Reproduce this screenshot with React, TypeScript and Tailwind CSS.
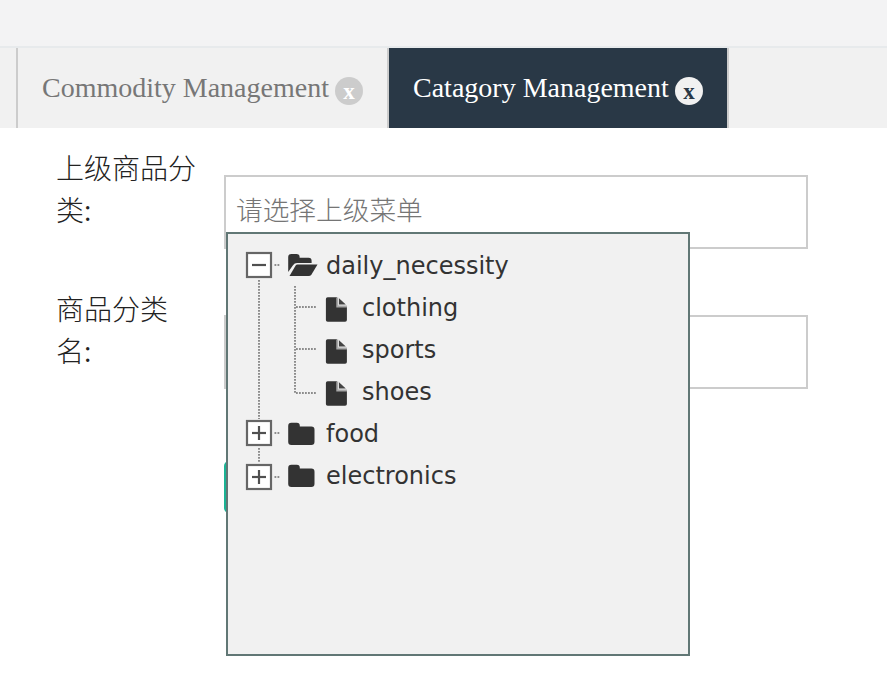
import React from "react";

type TabProps = { title: string; active?: boolean };

function Tab({ title, active }: TabProps) {
  return (
    <div
      className={
        active
          ? "flex h-20 w-[340px] shrink-0 border-r-2 border-[#cccccc] bg-[#293846] pl-6 text-white"
          : "flex h-20 w-[373px] shrink-0 border-x-2 border-[#cccccc] pl-6 text-[#777777]"
      }
    >
      <span
        className={
          active
            ? "mt-5 w-[262px] whitespace-nowrap text-[28px] leading-10"
            : "mt-5 w-[293px] whitespace-nowrap text-[28px] leading-10"
        }
      >
        {title}
      </span>
      <span
        className={
          active
            ? "mt-[29px] flex h-7 w-7 items-center justify-center rounded-full bg-[#f1f1f1] pt-px text-[23px] font-bold leading-7 text-[#293846]"
            : "mt-[29px] flex h-7 w-7 items-center justify-center rounded-full bg-[#cccccc] pt-px text-[23px] font-bold leading-7 text-white"
        }
      >
        x
      </span>
    </div>
  );
}

function Toggle({ y, open }: { y: number; open?: boolean }) {
  return (
    <g>
      <rect x="1" y={y + 1} width="24" height="24" fill="#fff" stroke="#666" strokeWidth="2.2" />
      <path d={`M6 ${y + 13}H20`} stroke="#505050" strokeWidth="2.2" />
      {!open && <path d={`M13 ${y + 6}V${y + 20}`} stroke="#505050" strokeWidth="2.2" />}
    </g>
  );
}

const dots = { stroke: "#8c8c8c", strokeWidth: 2, strokeDasharray: "1.8 1.2" };

function FolderOpen() {
  return (
    <svg className="h-[42px] w-8 shrink-0" viewBox="0 0 32 42" fill="#333">
      <path d="M1.200 28V13q0-3 3-3h5.400q3 0 3 3v.7h9q3 0 3 3v2.300H10q-2.500 0-4 2.200z" />
      <path d="M10.500 20.500H30.500L24.500 30.500Q23.500 32 21.500 32H2.500L8.500 21.700Q9.200 20.500 10.500 20.500z" />
    </svg>
  );
}

function Folder() {
  return (
    <svg className="h-[42px] w-8 shrink-0" viewBox="0 0 32 42" fill="#333">
      <path d="M1.200 14q0-3.200 3.200-3.200h5.400q3 0 3 3v.700h11.500q3.200 0 3.200 3.200v12q0 3.200-3.200 3.200H4.400q-3.200 0-3.200-3.200z" />
    </svg>
  );
}

function FileIcon() {
  return (
    <svg className="h-[42px] w-8 shrink-0" viewBox="0 0 32 42">
      <path d="M2.700 11.200H12V20.700H21.900V34q0 1.800-1.800 1.800H2.700q-1.800 0-1.800-1.800V13q0-1.800 1.800-1.800z" fill="#333" />
      <path d="M12.300 11.500V20.500H21.900" stroke="#a8a8a8" strokeWidth="2" fill="none" />
      <path d="M14 12.200V18.500H20.800z" fill="#444" />
    </svg>
  );
}

function Label({ children }: { children: React.ReactNode }) {
  return <span className="whitespace-nowrap pt-px text-[24px] font-normal leading-[42px] text-[#333333]">{children}</span>;
}

function ChildRow({ name, last }: { name: string; last?: boolean }) {
  return (
    <li className="flex h-[42px]">
      <svg className="h-[42px] w-[79px] shrink-0" viewBox="0 0 79 42">
        <path d="M13 0V42" {...dots} />
        <path d={last ? "M49 0V24" : "M49 0V42"} {...dots} />
        <path d={last ? "M50 23H70" : "M50 21H70"} {...dots} />
      </svg>
      <FileIcon />
      <span className="w-[5px]" />
      <Label>{name}</Label>
    </li>
  );
}

function RootRow({ name, open, last }: { name: string; open?: boolean; last?: boolean }) {
  const y = last ? 10 : 8;
  return (
    <li className="flex h-[42px]">
      <svg className="h-[42px] w-[41px] shrink-0 overflow-visible" viewBox="0 0 41 42">
        {!open && <path d={`M13 0V${y - 1}`} {...dots} />}
        {!last && <path d={`M13 ${y + 28}V42`} {...dots} />}
        <path d={`M28.500 ${y + 13}H34`} {...dots} />
        <Toggle y={y} open={open} />
      </svg>
      {open ? <FolderOpen /> : <Folder />}
      <span className="w-[7px]" />
      <Label>{name}</Label>
    </li>
  );
}

function TreeMenu() {
  return (
    <ul className="absolute left-0 top-[55px] h-[424px] w-[464px] border-2 border-[#617775] bg-[#f1f1f1] pl-[18px] pt-[10px] font-['DejaVu_Sans',sans-serif]">
      <RootRow name="daily_necessity" open />
      <ChildRow name="clothing" />
      <ChildRow name="sports" />
      <ChildRow name="shoes" last />
      <RootRow name="food" />
      <RootRow name="electronics" last />
    </ul>
  );
}

export default function App() {
  return (
    <div className="h-[691px] w-[887px] overflow-hidden bg-white">
      <header className="h-12 border-b-2 border-[#e7eaec] bg-[#f3f3f4]" />
      <nav className="flex h-20 bg-[#f1f1f1] pl-4 font-['Liberation_Serif',serif]">
        <Tab title="Commodity Management" />
        <Tab title="Catagory Management" active />
      </nav>
      <form className="pl-14 font-['Noto_Sans_CJK_SC',sans-serif] text-[28px] font-light text-[#222222]">
        <div className="flex h-[141px] pt-[18px]">
          <label className="w-[168px] leading-[42px]">
            上级商品分
            <br />类<span className="font-['Open_Sans',sans-serif] font-normal">:</span>
          </label>
          <div className="relative mt-[29px] h-[74px] w-[584px] border-2 border-[#cccccc]">
            <div className="pl-[10px] pt-[9px] text-[26.700px] leading-[46px] text-[#757575]">请选择上级菜单</div>
            <TreeMenu />
          </div>
        </div>
        <div className="flex h-[141px] pt-[18px]">
          <label className="w-[168px] leading-[42px]">
            商品分类
            <br />名<span className="font-['Open_Sans',sans-serif] font-normal">:</span>
          </label>
          <div className="mt-7 h-[74px] w-[584px] border-2 border-[#cccccc]" />
        </div>
        <div className="ml-[168px] mt-[51px] h-[52px] w-24 rounded-[5px] bg-[#1ab394]" />
      </form>
    </div>
  );
}
